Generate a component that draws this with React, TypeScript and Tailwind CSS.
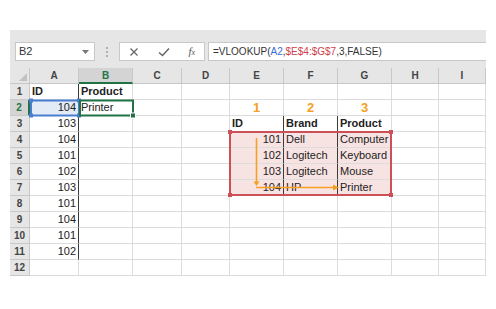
import React from 'react';

type Cell = { t: string; align?: 'r' | 'c'; bold?: boolean; orange?: boolean };

const cols = [
  { k: 'A', w: 'w-[49px]' },
  { k: 'B', w: 'w-[54px]' },
  { k: 'C', w: 'w-[49px]' },
  { k: 'D', w: 'w-[48px]' },
  { k: 'E', w: 'w-[54px]' },
  { k: 'F', w: 'w-[54px]' },
  { k: 'G', w: 'w-[54px]' },
  { k: 'H', w: 'w-[47px]' },
  { k: 'I', w: 'w-[47px]' },
];

const ids = ['104', '103', '104', '101', '102', '103', '101', '104', '101', '102'];

const cells: Record<string, Cell> = {
  A1: { t: 'ID', bold: true },
  B1: { t: 'Product', bold: true },
  B2: { t: 'Printer' },
  E2: { t: '1', align: 'c', orange: true },
  F2: { t: '2', align: 'c', orange: true },
  G2: { t: '3', align: 'c', orange: true },
  E3: { t: 'ID', bold: true },
  F3: { t: 'Brand', bold: true },
  G3: { t: 'Product', bold: true },
  E4: { t: '101', align: 'r' }, F4: { t: 'Dell' }, G4: { t: 'Computer' },
  E5: { t: '102', align: 'r' }, F5: { t: 'Logitech' }, G5: { t: 'Keyboard' },
  E6: { t: '103', align: 'r' }, F6: { t: 'Logitech' }, G6: { t: 'Mouse' },
  E7: { t: '104', align: 'r' }, F7: { t: 'HP' }, G7: { t: 'Printer' },
};
ids.forEach((v, i) => { cells[`A${i + 2}`] = { t: v, align: 'r' }; });

const darkRight = (c: string, r: number) =>
  (c === 'A' && r <= 11) || ((c === 'E' || c === 'F') && r >= 3 && r <= 7);

const fillOf = (c: string, r: number) => {
  if (c === 'A' && r === 2) return 'bg-[#e3ebf7]';
  if ((c === 'E' || c === 'F' || c === 'G') && r >= 4 && r <= 7) return 'bg-[#f8e3e3]';
  return 'bg-white';
};

const rows = Array.from({ length: 12 }, (_, i) => i + 1);

export default function App() {
  return (
    <div className="relative w-[496px] h-[309px] bg-white pt-[30px] pl-[10px] font-['Liberation_Sans',sans-serif] text-[#222]">
      <div className="w-[476px]">
        {/* formula toolbar */}
        <div className="h-[38px] bg-[#e6e6e6] flex items-start pt-[12px] pl-[5px]">
          <div className="w-[80px] h-[19px] bg-white border border-[#c8c8c8] flex items-center justify-between pl-[3px] pr-[5px]">
            <span className="text-[11px] text-[#333]">B2</span>
            <svg width="7" height="4" viewBox="0 0 7 4"><path d="M0 0h7L3.5 4z" fill="#777" /></svg>
          </div>
          <div className="w-[24px] h-[19px] flex flex-col items-center justify-center gap-[2px]">
            <span className="w-[2px] h-[2px] bg-[#b0b0b0]" />
            <span className="w-[2px] h-[2px] bg-[#b0b0b0]" />
            <span className="w-[2px] h-[2px] bg-[#b0b0b0]" />
          </div>
          <div className="w-[86px] h-[19px] bg-white border border-[#c8c8c8] flex items-center justify-between px-[9px]">
            <svg width="10" height="10" viewBox="0 0 10 10"><path d="M1.5 1.5l7 7M8.5 1.5l-7 7" stroke="#666" strokeWidth="1.3" /></svg>
            <svg width="12" height="10" viewBox="0 0 12 10"><path d="M1 5.5l3.5 3L11 1.5" stroke="#666" strokeWidth="1.5" fill="none" /></svg>
            <span className="font-['Liberation_Serif',serif] italic text-[11px] text-[#555] leading-none">f<span className="text-[8px]">x</span></span>
          </div>
          <div className="ml-[3px] flex-1 h-[19px] bg-white border border-[#c8c8c8] border-r-0 flex items-center pl-[4px] text-[10px] text-[#333] whitespace-nowrap">
            =VLOOKUP(<span className="text-[#3a6fd8]">A2</span>,<span className="text-[#d0404c]">$E$4:$G$7</span>,3,FALSE)
          </div>
        </div>

        {/* column headers */}
        <div className="flex h-[16px]">
          <div className="w-[20px] h-[16px] bg-[#e6e6e6] border-r border-b border-[#c8c8c8] flex items-end justify-end p-[2px]">
            <svg width="8" height="8" viewBox="0 0 8 8"><path d="M8 0v8H0z" fill="#c2c2c2" /></svg>
          </div>
          {cols.map(c => (
            <div
              key={c.k}
              className={`${c.w} h-[16px] border-r border-[#c8c8c8] flex items-center justify-center text-[10px] font-bold ${c.k === 'B' ? 'bg-[#d4d4d4] text-[#217346] border-b-2 border-b-[#217346]' : 'bg-[#e6e6e6] text-[#444] border-b border-b-[#c8c8c8]'}`}
            >
              {c.k}
            </div>
          ))}
        </div>

        {/* rows */}
        {rows.map(r => (
          <div key={r} className="flex h-[16px]">
            <div className={`w-[20px] h-[16px] border-b border-[#c8c8c8] flex items-center justify-center text-[10px] font-bold ${r === 2 ? 'bg-[#d4d4d4] text-[#217346] border-r-2 border-r-[#217346]' : 'bg-[#e6e6e6] text-[#444] border-r border-r-[#c8c8c8]'}`}>
              {r}
            </div>
            {cols.map(c => {
              const cell = cells[`${c.k}${r}`];
              return (
                <div
                  key={c.k}
                  className={`${c.w} h-[16px] border-b border-[#dcdcdc] border-r ${darkRight(c.k, r) ? 'border-r-[#3a3a3a]' : 'border-r-[#dcdcdc]'} ${fillOf(c.k, r)} flex items-center px-[2px] whitespace-nowrap overflow-hidden ${cell?.align === 'r' ? 'justify-end' : cell?.align === 'c' ? 'justify-center' : 'justify-start'}`}
                >
                  {cell && (
                    <span className={cell.orange ? 'text-[13px] font-bold text-[#f5a020]' : `text-[11px] ${cell.bold ? 'font-bold' : ''}`}>
                      {cell.t}
                    </span>
                  )}
                </div>
              );
            })}
          </div>
        ))}
      </div>

      {/* selection and range overlays */}
      <svg className="absolute inset-0 pointer-events-none" width="496" height="309" viewBox="0 0 496 309">
        {/* A2 reference range */}
        <rect x="31" y="100.5" width="48" height="15" fill="none" stroke="#4a7ed0" strokeWidth="2" />
        <rect x="29" y="98.5" width="4" height="4" fill="#4a7ed0" />
        <rect x="77" y="98.5" width="4" height="4" fill="#4a7ed0" />
        <rect x="29" y="113.5" width="4" height="4" fill="#4a7ed0" />
        <rect x="77" y="113.5" width="4" height="4" fill="#4a7ed0" />
        {/* active cell B2 */}
        <rect x="80" y="100.5" width="53" height="15" fill="none" stroke="#217346" strokeWidth="2" />
        <rect x="130.5" y="113" width="5" height="5" fill="#217346" stroke="#fff" strokeWidth="1" />
        {/* lookup table range */}
        <rect x="230" y="132" width="161" height="63" fill="none" stroke="#cc5058" strokeWidth="2" />
        <rect x="228" y="130" width="4" height="4" fill="#cc5058" />
        <rect x="389" y="130" width="4" height="4" fill="#cc5058" />
        <rect x="228" y="193" width="4" height="4" fill="#cc5058" />
        <rect x="389" y="193" width="4" height="4" fill="#cc5058" />
        {/* lookup arrows */}
        <path d="M256.5 138V183" stroke="#f5a020" strokeWidth="1.6" />
        <path d="M253.5 181.5L256.5 186L259.5 181.5Z" fill="#f5a020" />
        <path d="M256 187.5H334" stroke="#f5a020" strokeWidth="1.6" />
        <path d="M333 184.5L339 187.5L333 190.5Z" fill="#f5a020" />
      </svg>
    </div>
  );
}
